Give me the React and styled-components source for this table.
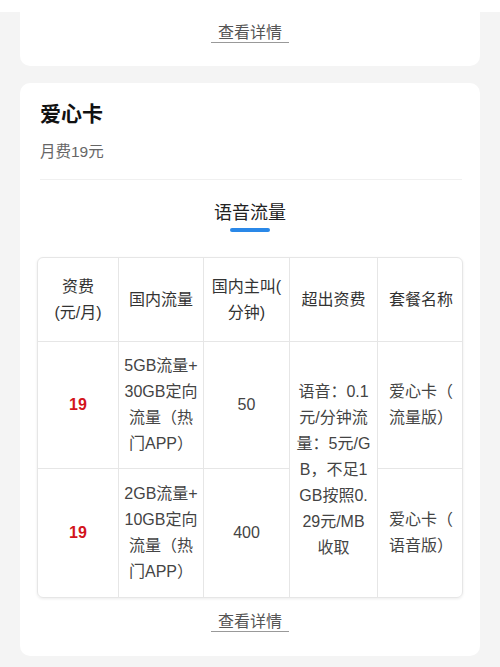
import React from 'react';
import styled, { createGlobalStyle } from 'styled-components';

const GlobalStyle = createGlobalStyle`
  body {
    margin: 0;
    background: #f4f4f4;
    font-family: "Liberation Sans", "Noto Sans CJK SC", sans-serif;
    color: #333;
  }
`

const TopStrip = styled.div`
  height: 12px;
  background: #fff;
`

const Page = styled.div`
  display: flex;
  flex-direction: column;
  gap: 17px;
  padding: 0 20px 12px;
`

const Card = styled.div`
  background: #fff;
  border-radius: ${p => (p.cut ? '0 0 10px 10px' : '10px')};
  padding: ${p => (p.cut ? '12px 17px 23px' : '17px 17px 24px')};
  display: flex;
  flex-direction: column;
`

const Title = styled.h2`
  margin: 0 3px;
  font-size: 21px;
  line-height: 28px;
  font-weight: bold;
  color: #111;
`

const Sub = styled.div`
  margin: 14px 3px 0;
  font-size: 15.5px;
  line-height: 20px;
  color: #666;
`

const Divider = styled.div`
  margin: 17px 1px 0 3px;
  height: 1px;
  background: #f0f0f0;
`

const TabTitle = styled.div`
  margin-top: 21px;
  text-align: center;
  font-size: 18px;
  line-height: 24px;
  color: #222;
`

const TabBar = styled.div`
  align-self: center;
  margin-top: 3px;
  width: 40px;
  height: 4px;
  border-radius: 2px;
  background: #2a88e8;
`

const TableWrap = styled.div`
  margin-top: 25px;
  border: 1px solid #e6e6e6;
  border-radius: 6px;
  overflow: hidden;
  box-shadow: 0 1px 3px rgba(0, 0, 0, 0.08);
`

const Table = styled.table`
  width: 100%;
  border-collapse: separate;
  border-spacing: 0;
  table-layout: fixed;
`

const Cell = styled.td`
  padding: 0;
  height: ${p => p.h || 'auto'};
  border-right: 1px solid #e6e6e6;
  border-bottom: ${p => (p.last ? 'none' : '1px solid #e6e6e6')};
  text-align: center;
  vertical-align: middle;
  font-size: 16px;
  line-height: 26px;
  white-space: nowrap;
  color: ${p => (p.red ? '#d3141c' : p.head ? '#333' : '#444')};
  font-weight: ${p => (p.red ? 'bold' : 'normal')};
  &:last-child {
    border-right: none;
  }
`

const LinkRow = styled.div`
  display: flex;
  justify-content: center;
  margin-top: ${p => p.top || '0'};
`

const Link = styled.span`
  padding: 0 7px;
  font-size: 16px;
  line-height: 18px;
  color: #555;
  border-bottom: 1px solid #999;
`

const Lines = ({ text }) =>
  text.split('|').map((t, i, arr) => (
    <React.Fragment key={i}>
      {t}
      {i < arr.length - 1 && <br />}
    </React.Fragment>
  ))

const widths = [81, 85, 86, 88, 86]
const heads = ['资费|(元/月)', '国内流量', '国内主叫(|分钟)', '超出资费', '套餐名称']
const over = '语音：0.1|元/分钟流|量：5元/G|B，不足1|GB按照0.|29元/MB|收取'

export default function App() {
  return (
    <>
      <GlobalStyle />
      <TopStrip />
      <Page>
        <Card cut>
          <LinkRow><Link>查看详情</Link></LinkRow>
        </Card>
        <Card>
          <Title>爱心卡</Title>
          <Sub>月费19元</Sub>
          <Divider />
          <TabTitle>语音流量</TabTitle>
          <TabBar />
          <TableWrap>
            <Table>
              <colgroup>
                {widths.map((w, i) => <col key={i} style={{ width: w }} />)}
              </colgroup>
              <tbody>
                <tr>
                  {heads.map((h, i) => (
                    <Cell key={i} head h="83px"><Lines text={h} /></Cell>
                  ))}
                </tr>
                <tr>
                  <Cell red h="126px">19</Cell>
                  <Cell><Lines text="5GB流量+|30GB定向|流量（热|门APP）" /></Cell>
                  <Cell>50</Cell>
                  <Cell rowSpan={2} last><Lines text={over} /></Cell>
                  <Cell><Lines text="爱心卡（|流量版）" /></Cell>
                </tr>
                <tr>
                  <Cell red last h="128px">19</Cell>
                  <Cell last><Lines text="2GB流量+|10GB定向|流量（热|门APP）" /></Cell>
                  <Cell last>400</Cell>
                  <Cell last><Lines text="爱心卡（|语音版）" /></Cell>
                </tr>
              </tbody>
            </Table>
          </TableWrap>
          <LinkRow top="15px"><Link>查看详情</Link></LinkRow>
        </Card>
      </Page>
    </>
  );
}
